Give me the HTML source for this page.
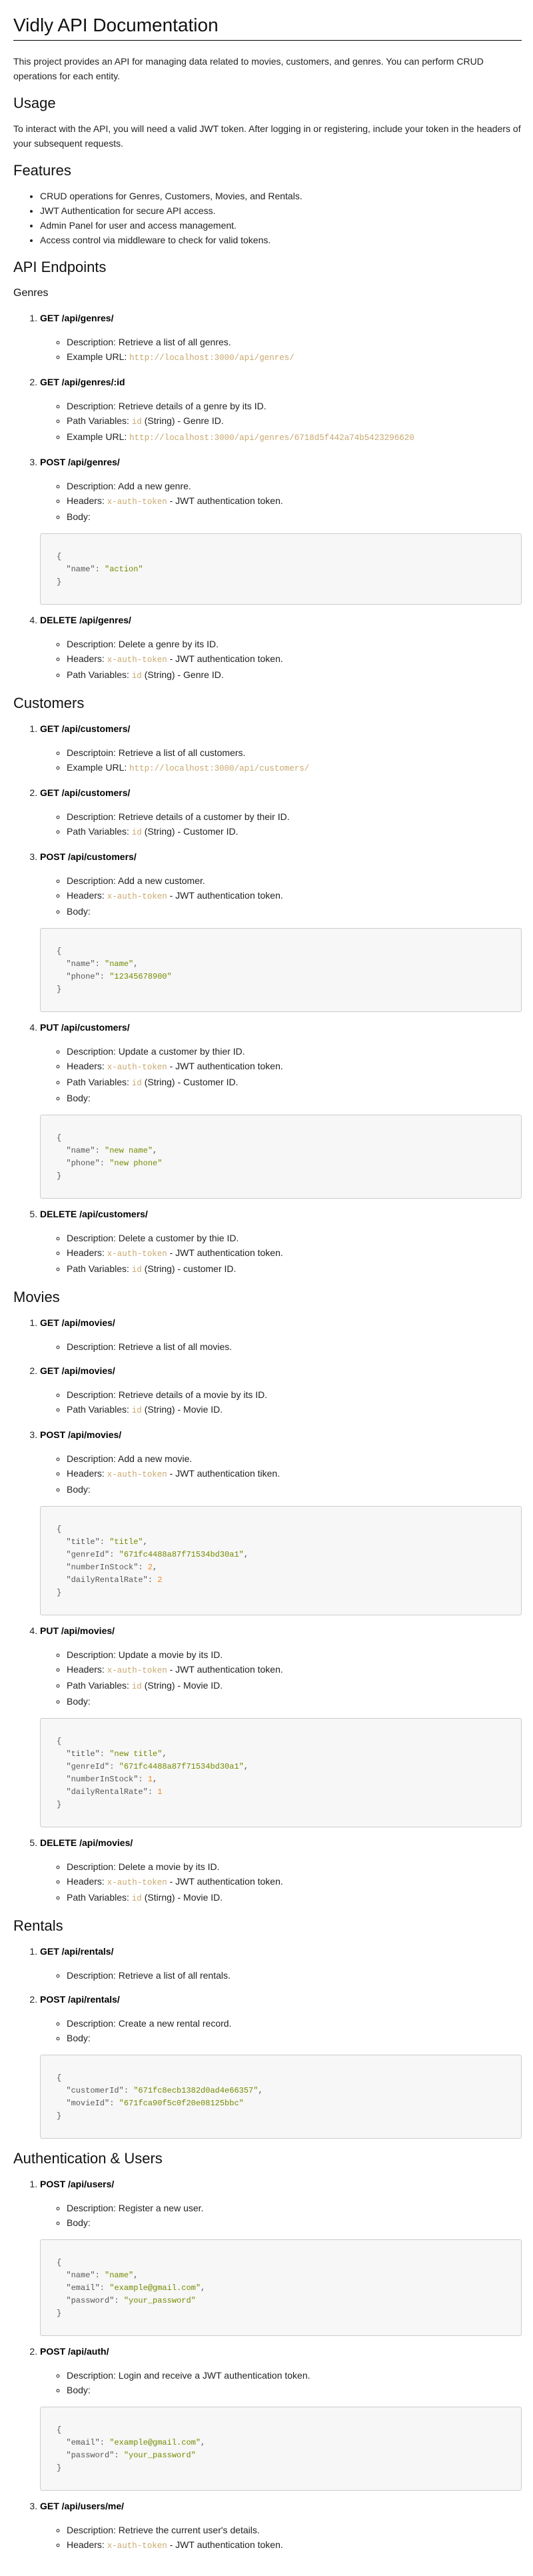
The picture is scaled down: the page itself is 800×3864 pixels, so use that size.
<!DOCTYPE html>
<html><head><meta charset="utf-8">
<style>
html,body{margin:0;padding:0;background:#fff}
body{padding:20px 17px 20px 20px;font-family:"Liberation Sans",Arial,sans-serif;font-size:14px;line-height:22px;color:#222;width:763px}
h1{font-size:28px;font-weight:normal;line-height:36px;margin:0 0 20px;padding-bottom:4px;border-bottom:1px solid #000;color:#111}
h2{font-size:22px;font-weight:normal;line-height:30px;margin:15px 0 12px;color:#111}
h3{font-size:16px;font-weight:normal;line-height:22px;margin:13px 0 15px;color:#111}
p{margin:0 0 14px}
ul.f{margin:12px 0 15px;padding-left:40px;list-style:disc}
ol{margin:0;padding-left:40px}
ol>li{margin:0}
ol>li>p.t{margin:0 0 14px}
ol>li>p.t b{color:#000}
ol ul{margin:0 0 14px;padding-left:40px;list-style:circle}
code{font-family:"Liberation Mono",monospace;font-size:12.5px;color:#c8a86f}
pre{margin:0 0 12px;background:#f7f7f7;border:1px solid #ccc;border-radius:3px;padding:25px 24px 23px;font-family:"Liberation Mono",monospace;font-size:12px;line-height:19px;color:#555}
pre .s{color:#718c00}
pre .n{color:#f5871f}
</style></head><body>
<h1>Vidly API Documentation</h1>
<p>This project provides an API for managing data related to movies, customers, and genres. You can perform CRUD operations for each entity.</p>
<h2>Usage</h2>
<p>To interact with the API, you will need a valid JWT token. After logging in or registering, include your token in the headers of your subsequent requests.</p>
<h2>Features</h2>
<ul class="f">
<li>CRUD operations for Genres, Customers, Movies, and Rentals.</li>
<li>JWT Authentication for secure API access.</li>
<li>Admin Panel for user and access management.</li>
<li>Access control via middleware to check for valid tokens.</li>
</ul>
<h2>API Endpoints</h2>
<h3>Genres</h3>
<ol>
<li><p class="t"><b>GET /api/genres/</b></p><ul>
<li>Description: Retrieve a list of all genres.</li>
<li>Example URL: <code>http://localhost:3000/api/genres/</code></li></ul></li>
<li><p class="t"><b>GET /api/genres/:id</b></p><ul>
<li>Description: Retrieve details of a genre by its ID.</li>
<li>Path Variables: <code>id</code> (String) - Genre ID.</li>
<li>Example URL: <code>http://localhost:3000/api/genres/6718d5f442a74b5423296620</code></li></ul></li>
<li><p class="t"><b>POST /api/genres/</b></p><ul>
<li>Description: Add a new genre.</li>
<li>Headers: <code>x-auth-token</code> - JWT authentication token.</li>
<li>Body:</li></ul>
<pre>{
  "name": <span class="s">"action"</span>
}</pre></li>
<li><p class="t"><b>DELETE /api/genres/</b></p><ul>
<li>Description: Delete a genre by its ID.</li>
<li>Headers: <code>x-auth-token</code> - JWT authentication token.</li>
<li>Path Variables: <code>id</code> (String) - Genre ID.</li></ul></li>
</ol>
<h2>Customers</h2>
<ol>
<li><p class="t"><b>GET /api/customers/</b></p><ul>
<li>Descriptoin: Retrieve a list of all customers.</li>
<li>Example URL: <code>http://localhost:3000/api/customers/</code></li></ul></li>
<li><p class="t"><b>GET /api/customers/</b></p><ul>
<li>Description: Retrieve details of a customer by their ID.</li>
<li>Path Variables: <code>id</code> (String) - Customer ID.</li></ul></li>
<li><p class="t"><b>POST /api/customers/</b></p><ul>
<li>Description: Add a new customer.</li>
<li>Headers: <code>x-auth-token</code> - JWT authentication token.</li>
<li>Body:</li></ul>
<pre>{
  "name": <span class="s">"name"</span>,
  "phone": <span class="s">"12345678900"</span>
}</pre></li>
<li><p class="t"><b>PUT /api/customers/</b></p><ul>
<li>Description: Update a customer by thier ID.</li>
<li>Headers: <code>x-auth-token</code> - JWT authentication token.</li>
<li>Path Variables: <code>id</code> (String) - Customer ID.</li>
<li>Body:</li></ul>
<pre>{
  "name": <span class="s">"new name"</span>,
  "phone": <span class="s">"new phone"</span>
}</pre></li>
<li><p class="t"><b>DELETE /api/customers/</b></p><ul>
<li>Description: Delete a customer by thie ID.</li>
<li>Headers: <code>x-auth-token</code> - JWT authentication token.</li>
<li>Path Variables: <code>id</code> (String) - customer ID.</li></ul></li>
</ol>
<h2>Movies</h2>
<ol>
<li><p class="t"><b>GET /api/movies/</b></p><ul>
<li>Description: Retrieve a list of all movies.</li></ul></li>
<li><p class="t"><b>GET /api/movies/</b></p><ul>
<li>Description: Retrieve details of a movie by its ID.</li>
<li>Path Variables: <code>id</code> (String) - Movie ID.</li></ul></li>
<li><p class="t"><b>POST /api/movies/</b></p><ul>
<li>Description: Add a new movie.</li>
<li>Headers: <code>x-auth-token</code> - JWT authentication tiken.</li>
<li>Body:</li></ul>
<pre>{
  "title": <span class="s">"title"</span>,
  "genreId": <span class="s">"671fc4488a87f71534bd30a1"</span>,
  "numberInStock": <span class="n">2</span>,
  "dailyRentalRate": <span class="n">2</span>
}</pre></li>
<li><p class="t"><b>PUT /api/movies/</b></p><ul>
<li>Description: Update a movie by its ID.</li>
<li>Headers: <code>x-auth-token</code> - JWT authentication token.</li>
<li>Path Variables: <code>id</code> (String) - Movie ID.</li>
<li>Body:</li></ul>
<pre>{
  "title": <span class="s">"new title"</span>,
  "genreId": <span class="s">"671fc4488a87f71534bd30a1"</span>,
  "numberInStock": <span class="n">1</span>,
  "dailyRentalRate": <span class="n">1</span>
}</pre></li>
<li><p class="t"><b>DELETE /api/movies/</b></p><ul>
<li>Description: Delete a movie by its ID.</li>
<li>Headers: <code>x-auth-token</code> - JWT authentication token.</li>
<li>Path Variables: <code>id</code> (Stirng) - Movie ID.</li></ul></li>
</ol>
<h2>Rentals</h2>
<ol>
<li><p class="t"><b>GET /api/rentals/</b></p><ul>
<li>Description: Retrieve a list of all rentals.</li></ul></li>
<li><p class="t"><b>POST /api/rentals/</b></p><ul>
<li>Description: Create a new rental record.</li>
<li>Body:</li></ul>
<pre>{
  "customerId": <span class="s">"671fc8ecb1382d0ad4e66357"</span>,
  "movieId": <span class="s">"671fca90f5c0f20e08125bbc"</span>
}</pre></li>
</ol>
<h2>Authentication &amp; Users</h2>
<ol>
<li><p class="t"><b>POST /api/users/</b></p><ul>
<li>Description: Register a new user.</li>
<li>Body:</li></ul>
<pre>{
  "name": <span class="s">"name"</span>,
  "email": <span class="s">"example@gmail.com"</span>,
  "password": <span class="s">"your_password"</span>
}</pre></li>
<li><p class="t"><b>POST /api/auth/</b></p><ul>
<li>Description: Login and receive a JWT authentication token.</li>
<li>Body:</li></ul>
<pre>{
  "email": <span class="s">"example@gmail.com"</span>,
  "password": <span class="s">"your_password"</span>
}</pre></li>
<li><p class="t"><b>GET /api/users/me/</b></p><ul>
<li>Description: Retrieve the current user's details.</li>
<li>Headers: <code>x-auth-token</code> - JWT authentication token.</li></ul></li>
</ol>
</body></html>
